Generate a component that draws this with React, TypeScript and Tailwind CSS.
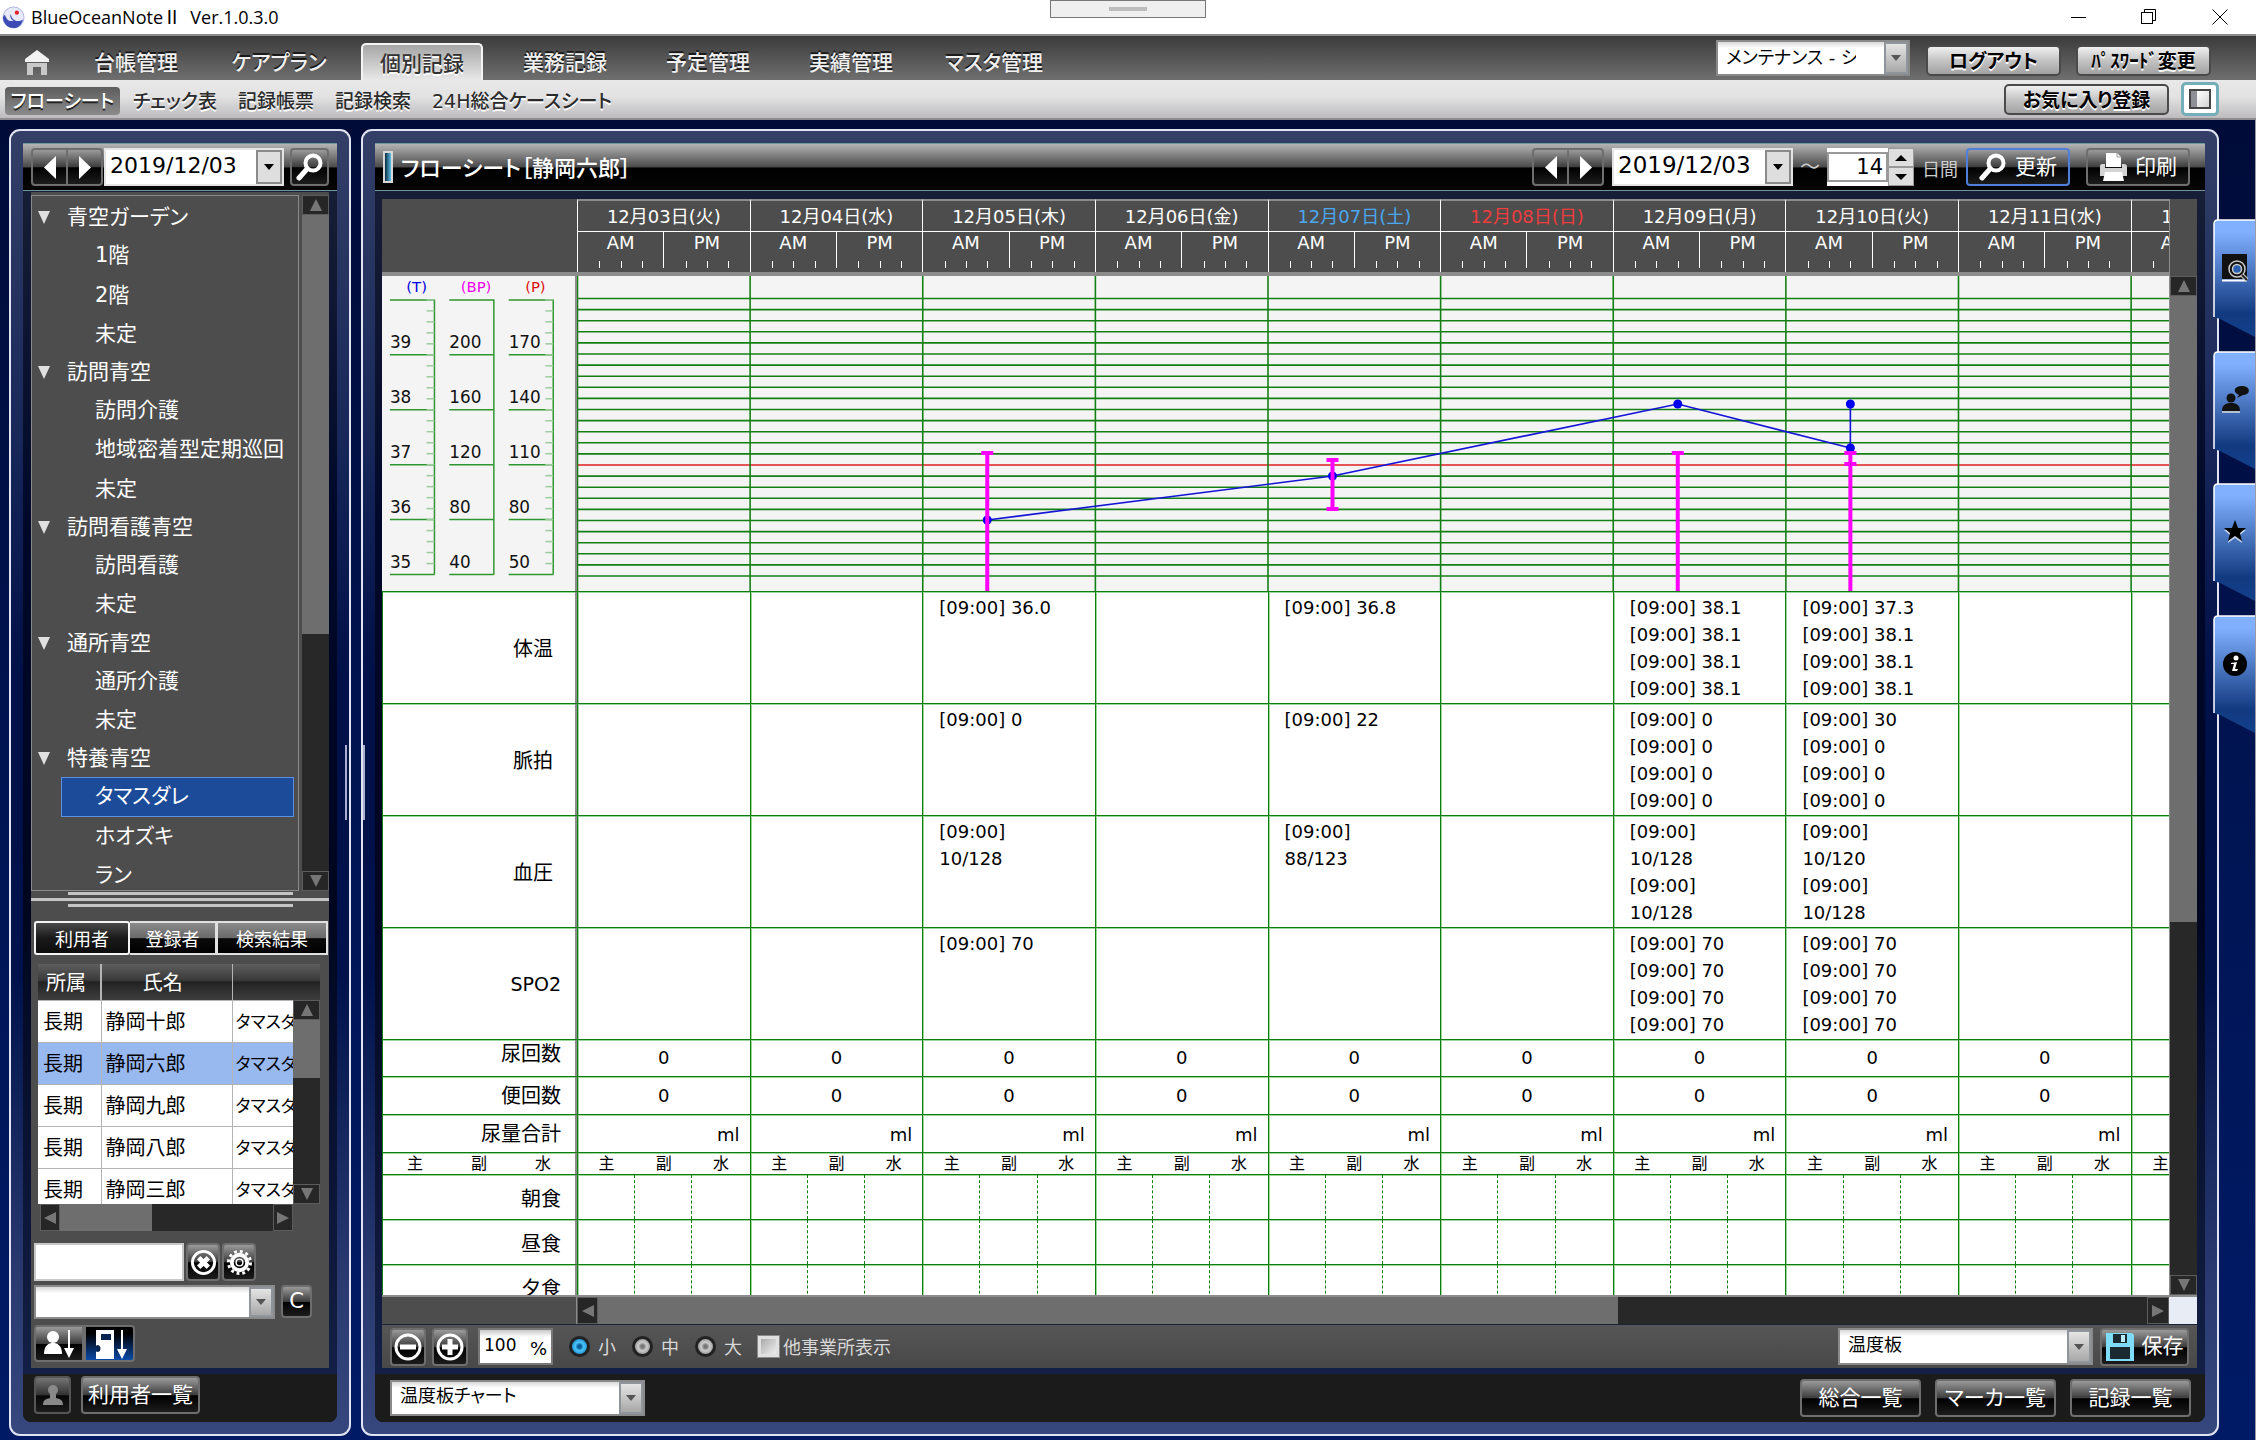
import type { ReactNode } from "react";
import clsx from "clsx";

const NAV = ["台帳管理", "ケアプラン", "個別記録", "業務記録", "予定管理", "実績管理", "マスタ管理"];
const SUBNAV = ["フローシート", "チェック表", "記録帳票", "記録検索", "24H総合ケースシート"];

const TREE = [
  { label: "青空ガーデン", children: ["1階", "2階", "未定"] },
  { label: "訪問青空", children: ["訪問介護", "地域密着型定期巡回", "未定"] },
  { label: "訪問看護青空", children: ["訪問看護", "未定"] },
  { label: "通所青空", children: ["通所介護", "未定"] },
  { label: "特養青空", children: ["タマスダレ", "ホオズキ", "ラン"] },
];

const USERS = ["静岡十郎", "静岡六郎", "静岡九郎", "静岡八郎", "静岡三郎"];

const DAYS = [
  { date: "12月03日(火)" },
  { date: "12月04日(水)" },
  { date: "12月05日(木)" },
  { date: "12月06日(金)" },
  { date: "12月07日(土)", color: "text-[#4aa8f0]" },
  { date: "12月08日(日)", color: "text-[#f03c3c]" },
  { date: "12月09日(月)" },
  { date: "12月10日(火)" },
  { date: "12月11日(水)" },
  { date: "12月12日(木)" },
];

const t = "[09:00]";
const VITALS: { label: string; pad: string; cells: Record<number, string[]> }[] = [
  {
    label: "体温",
    pad: "pr-[22px]",
    cells: {
      2: [`${t} 36.0`],
      4: [`${t} 36.8`],
      6: [`${t} 38.1`, `${t} 38.1`, `${t} 38.1`, `${t} 38.1`],
      7: [`${t} 37.3`, `${t} 38.1`, `${t} 38.1`, `${t} 38.1`],
    },
  },
  {
    label: "脈拍",
    pad: "pr-[22px]",
    cells: {
      2: [`${t} 0`],
      4: [`${t} 22`],
      6: [`${t} 0`, `${t} 0`, `${t} 0`, `${t} 0`],
      7: [`${t} 30`, `${t} 0`, `${t} 0`, `${t} 0`],
    },
  },
  {
    label: "血圧",
    pad: "pr-[22px]",
    cells: {
      2: [t, "10/128"],
      4: [t, "88/123"],
      6: [t, "10/128", t, "10/128"],
      7: [t, "10/120", t, "10/128"],
    },
  },
  {
    label: "SPO2",
    pad: "pr-[14px]",
    cells: {
      2: [`${t} 70`],
      6: [`${t} 70`, `${t} 70`, `${t} 70`, `${t} 70`],
      7: [`${t} 70`, `${t} 70`, `${t} 70`, `${t} 70`],
    },
  },
];

const SCALES = [
  { title: "(T)", color: "#0000e0", x: 8, values: [39, 38, 37, 36, 35], ticks: true },
  { title: "(BP)", color: "#f000f0", x: 68, values: [200, 160, 120, 80, 40], ticks: false },
  { title: "(P)", color: "#e01010", x: 128, values: [170, 140, 110, 80, 50], ticks: true },
];

const GRID = "grid grid-cols-[195px_repeat(9,minmax(0,9fr))_minmax(0,2fr)]";
const LINE_B = "border-b border-[#0f7d0f] shadow-[0_1px_0_0_#9bd69b]";
const LINE_L = "border-l border-l-[#0f7d0f] shadow-[inset_1px_0_0_0_#9bd69b]";
const GLOSS =
  "bg-[linear-gradient(#9a9a9a_0%,#3c3c3c_50%,#000_52%,#1c1c1c_100%)] border-2 border-[#6e6e6e] rounded-[4px] text-white";
const BAR = "bg-[linear-gradient(#b4b4b4_0%,#4a4a4a_50%,#000_52%,#060606_100%)] border-y border-[#6f969c]";
const CHROME =
  "rounded-[5px] border-2 border-[#4a4a4a] bg-[linear-gradient(#f0f0f0,#c4c4c4_50%,#a2a2a2)] pt-[2px] text-[19px] leading-none font-bold text-black [text-shadow:0_2px_0_#fff]";

function Search({ className }: { className?: string }) {
  return (
    <svg viewBox="0 0 28 28" className={className} fill="none" stroke="#fff">
      <circle cx="17" cy="10" r="7.5" strokeWidth="4" />
      <path d="M11 16 L3 25" strokeWidth="5" strokeLinecap="round" />
    </svg>
  );
}

function Tri({ dir, className }: { dir: "up" | "down" | "left" | "right"; className?: string }) {
  const d = {
    up: "M6 0 L12 12 L0 12 Z",
    down: "M0 0 L12 0 L6 12 Z",
    left: "M12 0 L12 12 L0 6 Z",
    right: "M0 0 L12 6 L0 12 Z",
  }[dir];
  return (
    <svg viewBox="0 0 12 12" preserveAspectRatio="none" className={className} fill="currentColor">
      <path d={d} />
    </svg>
  );
}

function ScrollButton({ dir, className }: { dir: "up" | "down" | "left" | "right"; className: string }) {
  return (
    <button
      aria-label={dir}
      className={clsx(
        "flex shrink-0 items-center justify-center border border-[#5c5c5c] bg-[#262626] text-[#767676]",
        className
      )}
    >
      <Tri dir={dir} className="size-3" />
    </button>
  );
}

function VScroll({ thumb, className }: { thumb: string; className?: string }) {
  return (
    <div className={clsx("flex flex-col bg-[#282828]", className)}>
      <ScrollButton dir="up" className="h-5" />
      <div className={clsx("bg-[#6e6e6e]", thumb)} />
      <div className="flex-1" />
      <ScrollButton dir="down" className="h-5" />
    </div>
  );
}

function Combo({ label, value, className, pad }: { label: string; value?: string; className: string; pad?: string }) {
  return (
    <div className={clsx("flex border-2 border-[#8a8a8a] bg-white", className)}>
      <select
        aria-label={label}
        className={clsx(
          "min-w-0 flex-1 appearance-none bg-white bg-[linear-gradient(#d8d8d8,#fff_6px)] pl-2 text-[18px] leading-none text-black",
          pad ?? "pb-1"
        )}
      >
        <option>{value ?? ""}</option>
      </select>
      <span className="pointer-events-none flex w-6 items-center justify-center border-2 border-[#8f959b] bg-[linear-gradient(#e4e4e4,#a8a8a8)] text-[#555]">
        <Tri dir="down" className="h-[6px] w-[10px]" />
      </span>
    </div>
  );
}

function DateBox({ label, className }: { label: string; className: string }) {
  return (
    <div className={clsx("flex h-[38px] border-2 border-[#e4e4e4] bg-white", className)}>
      <input
        aria-label={label}
        defaultValue="2019/12/03"
        className="min-w-0 flex-1 pb-1 pl-[4px] leading-none text-black"
      />
      <button aria-label="カレンダー" className="flex w-[26px] items-center justify-center border-2 border-[#8a8a8a] bg-[#dedede]">
        <Tri dir="down" className="h-[6px] w-[10px] text-black" />
      </button>
    </div>
  );
}

function NavArrows() {
  return (
    <div className="flex h-[38px] w-[72px]">
      <button aria-label="前へ" className={clsx(GLOSS, "flex flex-1 items-center justify-center rounded-r-none border-r")}>
        <Tri dir="left" className="h-[23px] w-3" />
      </button>
      <button aria-label="次へ" className={clsx(GLOSS, "flex flex-1 items-center justify-center rounded-l-none border-l")}>
        <Tri dir="right" className="h-[23px] w-3" />
      </button>
    </div>
  );
}

function Panel({ children, className }: { children: ReactNode; className: string }) {
  return (
    <section
      className={clsx(
        "flex flex-col rounded-[11px] border-2 border-[#dfe4f0] bg-[linear-gradient(#333f66_0%,#1d2b5c_20%,#001048_42%,#00124c_65%,#2a3a70_88%,#36477e_100%)] p-3",
        className
      )}
    >
      <div className="flex min-h-0 flex-1 flex-col rounded-b-lg bg-[linear-gradient(#1a2138_0%,#00082a_30%,#00061f_60%,#16224a_100%)]">
        {children}
      </div>
    </section>
  );
}

function TitleBar() {
  return (
    <header className="relative flex h-[34px] items-center bg-white pl-[2px] text-black">
      <svg viewBox="0 0 24 24" className="size-[23px]">
        <circle cx="12" cy="12" r="11" fill="#e8ebf7" stroke="#a9b2dc" />
        <path d="M3 9 C5 15 8 17 12 15 C9 14 8 11 9 8 C10 14 15 18 22 14 C20 21 16 23 12 23 C6 23 1 18 1 12 C1 11 2 10 3 9 Z" fill="#3c4cb4" />
        <circle cx="15.500" cy="7" r="2.200" fill="#e0202c" />
      </svg>
      <h1 className="pl-[6px] font-['Open_Sans','Noto_Sans_CJK_JP',sans-serif] text-[18px] leading-none">
        BlueOceanNoteⅡ&nbsp; Ver.1.0.3.0
      </h1>
      <div className="absolute top-0 left-1/2 flex h-[18px] w-[156px] -translate-x-1/2 items-center justify-center border border-[#777] bg-[#efefef]">
        <span className="h-1 w-[38px] bg-[#bdbdbd]" />
      </div>
      <div className="ml-auto flex items-center">
        <button aria-label="最小化" className="flex w-[70px] justify-center">
          <svg viewBox="0 0 16 16" className="size-4" stroke="#000">
            <path d="M0 8.500 H15" />
          </svg>
        </button>
        <button aria-label="元に戻す" className="flex w-[70px] justify-center">
          <svg viewBox="0 0 16 16" className="size-4" stroke="#000" fill="none">
            <rect x="0.500" y="3.500" width="11" height="11" />
            <path d="M3.500 3.500 V0.500 H14.500 V11.500 H11.500" />
          </svg>
        </button>
        <button aria-label="閉じる" className="flex w-[72px] justify-center">
          <svg viewBox="0 0 16 16" className="size-4" stroke="#000">
            <path d="M0.500 0.500 L15.500 15.500 M15.500 0.500 L0.500 15.500" />
          </svg>
        </button>
      </div>
    </header>
  );
}

function MainMenu() {
  return (
    <div className="flex h-[46px] items-end border-t-2 border-[#8c8c8c] bg-[linear-gradient(#3b3b3b,#6f6f6f)]">
      <button aria-label="ホーム" className="mb-1 ml-6 w-[51px]">
        <svg viewBox="0 0 26 26" className="size-[26px]">
          <path d="M13 0 L25 9 V12 H1 V9 Z" fill="#f2f2f2" />
          <path d="M3 13 H23 V25 H17 V17 H9 V25 H3 Z" fill="#c8c8c8" />
        </svg>
      </button>
      <nav className="flex gap-[21px]">
        {NAV.map((n) => (
          <a
            key={n}
            href="#"
            className={clsx(
              "flex h-[37px] w-[122px] items-center justify-center pt-1 text-[21px] leading-none font-medium",
              n === "個別記録"
                ? "rounded-t-[5px] border-x-2 border-t-2 border-[#f4f4f4] bg-[linear-gradient(#a6a6a6,#e8e8e8)] text-[#333] [text-shadow:0_2px_0_#fff]"
                : "text-[#f0f0f0] [text-shadow:0_-2px_0_#1a1a1a]"
            )}
          >
            {n}
          </a>
        ))}
      </nav>
      <div className="mb-1 ml-auto flex items-start pr-[45px]">
        <Combo label="利用者区分" value="メンテナンス - システム" className="h-[36px] w-[194px]" pad="pr-7" />
        <button className={clsx(CHROME, "mt-[5px] ml-4 h-[31px] w-[135px]")}>ログアウト</button>
        <button className={clsx(CHROME, "mt-[5px] ml-[15px] h-[31px] w-[135px]")}>ﾊﾟｽﾜｰﾄﾞ変更</button>
      </div>
    </div>
  );
}

function SubMenu() {
  return (
    <div className="flex h-10 items-center border-b-2 border-[#8d8b8e] bg-[linear-gradient(#e9e9e9_0%,#e2e2e2_45%,#bdbbbe_100%)] pl-[5px]">
      <nav className="flex items-center gap-[21px] pt-1">
        {SUBNAV.map((n, i) => (
          <a
            key={n}
            href="#"
            className={clsx(
              "text-[19px] leading-none font-medium",
              i === 0
                ? "-mr-2 flex h-7 w-[115px] items-center justify-center rounded-[4px] bg-[linear-gradient(#5d5d5d,#8b8b8b)] text-white [text-shadow:0_2px_0_#222]"
                : "text-[#2b2b2b] [text-shadow:0_2px_0_#fff]"
            )}
          >
            {n}
          </a>
        ))}
      </nav>
      <button className={clsx(CHROME, "ml-auto h-[31px] w-[165px]")}>お気に入り登録</button>
      <button
        aria-label="サイドバー"
        className="mr-[37px] ml-3 flex h-[34px] w-[38px] items-center justify-center rounded-[5px] border-[3px] border-[#74aeba] bg-white"
      >
        <span className="flex h-5 w-[22px] border-2 border-[#444]">
          <span className="w-[6px] bg-[#8f8f98]" />
          <span className="flex-1 bg-[linear-gradient(135deg,#fff,#d5d5d5)]" />
        </span>
      </button>
    </div>
  );
}

function Tree() {
  return (
    <div className="h-[696px] flex-1 overflow-hidden border border-[#8a8a8a]">
      <ul className="flex h-[699px] flex-col pt-[3px] text-[21px] leading-none text-white">
        {TREE.map((g) => [
          <li key={g.label} className="flex flex-1 items-center pl-[6px]">
            <Tri dir="down" className="h-[13px] w-3 text-[#e0e0e0]" />
            <span className="pl-[17px]">{g.label}</span>
          </li>,
          ...g.children.map((c, i) => (
            <li
              key={g.label + i}
              className={clsx(
                "mr-1 ml-[29px] flex flex-1 items-center border pl-[33px]",
                c === "タマスダレ" ? "border-[#5d8fe0] bg-[#1b4b99]" : "border-transparent"
              )}
            >
              {c}
            </li>
          )),
        ])}
      </ul>
    </div>
  );
}

function UserList() {
  return (
    <div className="mt-[9px] ml-[7px] w-[282px]">
      <div className="flex h-60">
        <div className="w-[255px] overflow-hidden">
          <table className="w-full table-fixed border-collapse text-[20px] leading-none text-black">
            <thead>
              <tr className="h-9 bg-[linear-gradient(#5e5e5e_0%,#3a3a3a_45%,#222_50%,#3e3e3e_100%)] text-white">
                <th className="w-[63px] border-r-2 border-[#b4b4b4] pt-[2px] pr-[6px] font-normal">所属</th>
                <th className="w-[131px] border-r border-[#b4b4b4] pt-[2px] pr-2 font-normal">氏名</th>
                <th />
              </tr>
            </thead>
            <tbody>
              {USERS.map((u, i) => (
                <tr key={u} className={clsx("h-[42px] border-y border-[#b4b4b4]", i === 1 ? "bg-[#98b9f0]" : "bg-white")}>
                  <td className="border-r border-[#b4b4b4] pt-[2px] pl-[5px]">長期</td>
                  <td className="border-r border-[#b4b4b4] pt-[2px] pl-1">{u}</td>
                  <td className="overflow-hidden pt-[2px] pl-[3px] text-[17px] whitespace-nowrap">タマスダレ</td>
                </tr>
              ))}
            </tbody>
          </table>
        </div>
        <div className="flex w-[27px] flex-col">
          <div className="h-9 bg-[linear-gradient(#5e5e5e_0%,#3a3a3a_45%,#222_50%,#3e3e3e_100%)]" />
          <VScroll thumb="h-[58px]" className="flex-1" />
        </div>
      </div>
      <div className="ml-[2px] flex h-[27px] w-[253px] bg-[#282828]">
        <ScrollButton dir="left" className="w-5" />
        <div className="w-[92px] bg-[#6e6e6e]" />
        <ScrollButton dir="right" className="ml-auto w-5" />
      </div>
    </div>
  );
}

function Sidebar() {
  return (
    <Panel className="w-[342px] shrink-0">
      <div className={clsx(BAR, "flex h-12 items-center px-2")}>
        <NavArrows />
        <DateBox label="基準日" className="ml-px w-[180px] text-[22px]" />
        <button aria-label="検索" className={clsx(GLOSS, "ml-auto flex h-[38px] w-[39px] items-center justify-center")}>
          <Search className="size-7" />
        </button>
      </div>
      <div className="mx-2 mt-px flex flex-1 flex-col bg-[#4d4d4d]">
        <div className="flex pt-[3px]">
          <Tree />
          <VScroll thumb="h-[419px]" className="ml-[3px] w-[27px]" />
        </div>
        <div className="flex flex-col items-center gap-[3px] pt-px">
          <span className="h-[3px] w-[225px] bg-[#c4c4c4]" />
          <span className="h-[3px] w-full bg-[#c4c4c4]" />
          <span className="h-[3px] w-[225px] bg-[#c4c4c4]" />
        </div>
        <div className="mt-[14px] flex h-[34px] pr-px pl-[3px] text-[18px] leading-none text-white">
          <button className="w-24 rounded-[3px] border-2 border-[#f4f4f4] bg-[linear-gradient(#4a4a4a,#1a1a1a_50%,#0c0c0c)] pt-1">
            利用者
          </button>
          <button className="w-[86px] border-y-2 border-r border-[#e0e0e0] bg-[linear-gradient(#8a8a8a,#6a6a6a_50%,#0a0a0a_52%,#000)] pt-1">
            登録者
          </button>
          <button className="flex-1 border-2 border-[#e0e0e0] bg-[linear-gradient(#8a8a8a,#6a6a6a_50%,#0a0a0a_52%,#000)] pt-1">
            検索結果
          </button>
        </div>
        <UserList />
        <div className="mt-3 flex gap-[2px] pl-[3px]">
          <input aria-label="検索文字" className="h-[38px] w-[150px] border-2 border-[#c8c8c8] bg-white px-2 text-black" />
          <button aria-label="クリア" className={clsx(GLOSS, "flex h-[38px] w-[34px] items-center justify-center")}>
            <svg viewBox="0 0 28 28" className="size-[27px] shrink-0" fill="none" stroke="#fff" strokeWidth="3">
              <circle cx="14" cy="14" r="11.500" />
              <path d="M9 9 L19 19 M19 9 L9 19" strokeWidth="5" />
            </svg>
          </button>
          <button aria-label="設定" className={clsx(GLOSS, "flex h-[38px] w-[34px] items-center justify-center")}>
            <svg viewBox="0 0 28 28" className="size-[27px] shrink-0" fill="none" stroke="#fff">
              <circle cx="14" cy="14" r="11.500" strokeWidth="3" strokeDasharray="3 3.020" />
              <circle cx="14" cy="14" r="8" strokeWidth="4" />
              <circle cx="14" cy="14" r="3.500" strokeWidth="1.500" />
            </svg>
          </button>
        </div>
        <div className="mt-1 flex gap-[6px] pl-[3px]">
          <Combo label="絞り込み" className="h-[34px] w-[241px]" />
          <button className={clsx(GLOSS, "h-[33px] w-[31px] text-[21px] leading-none")}>C</button>
        </div>
        <div className="mt-[6px] flex h-[37px] pl-[3px]">
          <button aria-label="氏名順" className={clsx(GLOSS, "flex w-[50px] items-center justify-center rounded-r-none")}>
            <svg viewBox="0 0 34 28" className="h-7 w-[34px]" fill="#fff">
              <circle cx="11" cy="7" r="6" />
              <path d="M2 24 C2 15 7 13 11 13 C15 13 20 15 20 24 Z" />
              <path d="M26 0 H28 V18 H32 L27 28 L22 18 H26 Z" />
            </svg>
          </button>
          <button
            aria-label="部屋順"
            className="flex w-[51px] items-center justify-center rounded-r-[4px] border-2 border-[#6e6e6e] bg-[linear-gradient(#000_20%,#0c4aa8)]"
          >
            <svg viewBox="0 0 34 30" className="h-[30px] w-[34px]">
              <path fill="#fff" d="M3 1 H21 V30 H3 V23 A4 4 0 0 0 3 16 Z" />
              <path fill="#0a2450" d="M8 5 H18 V11 H8 Z M4 16 A3.500 3.500 0 1 1 4 23 Z" />
              <path fill="#fff" d="M28 1 H30 V20 H34 L29 30 L24 20 H28 Z" />
            </svg>
          </button>
        </div>
      </div>
      <div className="mt-[6px] flex h-12 items-start gap-[10px] rounded-b-lg bg-[#1b1b1b] pt-[2px] pl-[11px]">
        <button aria-label="利用者" className={clsx(GLOSS, "flex h-[38px] w-[37px] items-center justify-center opacity-70")}>
          <svg viewBox="0 0 22 22" className="size-[22px]" fill="#b8b8b8">
            <circle cx="11" cy="6" r="5" />
            <path d="M8 9 H14 V14 C18 15 21 16 21 21 H1 C1 16 4 15 8 14 Z" />
          </svg>
        </button>
        <button className={clsx(GLOSS, "h-[38px] w-[119px] text-[21px] leading-none")}>利用者一覧</button>
      </div>
    </Panel>
  );
}

function ScaleColumn() {
  const row = 11.1;
  return (
    <svg viewBox="0 0 195 315" className="block h-[315px] w-full" fontFamily="DejaVu Sans">
      {SCALES.map((s) => (
        <g key={s.title}>
          <text x={s.x + 27} y="15" fontSize="15" fill={s.color} textAnchor="middle">
            {s.title}
          </text>
          <path d={`M${s.x + 45} 22 V300`} stroke="#2f962f" strokeWidth="1.500" />
          {[0, 5, 10, 15, 20, 25].map((i) => (
            <path key={i} d={`M${s.x} ${22.5 + i * row} h45`} stroke="#2f962f" strokeWidth="1.500" />
          ))}
          {s.ticks &&
            Array.from({ length: 25 }, (_, i) => (
              <path key={i} d={`M${s.x + 37} ${22.5 + i * row} h8`} stroke="#9ccc9c" strokeWidth="1.500" />
            ))}
          {s.values.map((v, i) => (
            <text key={v} x={s.x} y={71 + i * 5 * row} fontSize="17" fill="#111">
              {v}
            </text>
          ))}
        </g>
      ))}
    </svg>
  );
}

function VitalChart() {
  const row = 11.1;
  const day = (1592 * 9) / 83;
  const x = (d: number) => d * day + 65;
  return (
    <svg viewBox="0 0 1592 315" preserveAspectRatio="none" className="block h-[315px] w-full">
      {Array.from({ length: 26 }, (_, i) => (
        <path key={i} d={`M0 ${22.5 + i * row} H1592`} stroke={i === 15 ? "#e02020" : "#148014"} strokeWidth="1.600" />
      ))}
      {Array.from({ length: 10 }, (_, i) => (
        <path key={i} d={`M${i * day + 0.5} 0 V315`} stroke="#148014" strokeWidth="1.600" />
      ))}
      <path
        d={`M${x(2)} 244 L${x(4)} 200 L${x(6)} 128 L${x(7)} 172 V128`}
        fill="none"
        stroke="#1414d8"
        strokeWidth="1.600"
      />
      {[[2, 244], [4, 200], [6, 128], [7, 172], [7, 128]].map(([d, y]) => (
        <circle key={`${d}-${y}`} cx={x(d)} cy={y} r="4.500" fill="#0000f0" />
      ))}
      <g stroke="#ff00ff" strokeWidth="4">
        <path d={`M${x(2)} 177 V315 M${x(2) - 6} 177 h12`} />
        <path d={`M${x(4)} 184 V233 M${x(4) - 6} 184 h12 M${x(4) - 6} 233 h12`} />
        <path d={`M${x(6)} 177 V315 M${x(6) - 6} 177 h12`} />
        <path d={`M${x(7)} 177 V315 M${x(7) - 6} 177 h12 M${x(7) - 6} 188 h12`} />
      </g>
    </svg>
  );
}

// The last day runs off the right edge, so its content keeps a full day's width.
function dayWidth(i: number) {
  return i === DAYS.length - 1 ? "w-[173px]" : "w-full";
}

function FlowSheet() {
  return (
    <table className="block w-full bg-white text-black">
      <thead className="block">
        <tr className={clsx(GRID, "h-[77px] border-b-4 border-[#8c8c8c] bg-[#4d4d4d] text-[18px] leading-none text-white")}>
          <th />
          {DAYS.map((d, i) => (
            <th key={d.date} className="flex flex-col overflow-hidden border-t-2 border-l border-t-[#8c8c8c] border-l-white font-normal">
              <div className={clsx("flex h-[30px] shrink-0 items-center justify-center pt-[2px]", d.color, dayWidth(i))}>{d.date}</div>
              <div className={clsx("flex h-[37px] shrink-0 border-t border-white", dayWidth(i))}>
                {["AM", "PM"].map((h) => (
                  <div key={h} className={clsx("flex flex-1 flex-col justify-between pt-[2px]", h === "PM" && "border-l border-white")}>
                    <span>{h}</span>
                    <span className="grid h-[7px] grid-cols-4">
                      <i />
                      <i className="border-l border-white" />
                      <i className="border-l border-white" />
                      <i className="border-l border-white" />
                    </span>
                  </div>
                ))}
              </div>
            </th>
          ))}
        </tr>
      </thead>
      <tbody className="block">
        <tr className={clsx(GRID, LINE_B, "bg-[#f4f4f4]")}>
          <th className="border-r-2 border-[#8c8c8c] font-normal">
            <ScaleColumn />
          </th>
          <td className="col-span-10">
            <VitalChart />
          </td>
        </tr>
        {VITALS.map((v) => (
          <tr key={v.label} className={clsx(GRID, LINE_B, "h-28")}>
            <th
              className={clsx(
                "flex items-center justify-end border-r-2 border-l border-r-[#8c8c8c] border-l-[#0f7d0f] pt-[2px] leading-none font-normal",
                v.label === "SPO2" ? "text-[19px]" : "text-[20px]",
                v.pad
              )}
            >
              {v.label}
            </th>
            {DAYS.map((d, i) => (
              <td key={d.date} className={clsx(LINE_L, "pt-[2px] pl-4 text-[18px] leading-[27px]")}>
                {v.cells[i]?.map((line, n) => (
                  <div key={n}>{line}</div>
                ))}
              </td>
            ))}
          </tr>
        ))}
        {["尿回数", "便回数", "尿量合計"].map((label) => (
          <tr key={label} className={clsx(GRID, LINE_B, label === "尿回数" ? "h-[37px]" : "h-[38px]")}>
            <th
              className={clsx(
                "flex justify-end border-r-2 border-l border-r-[#8c8c8c] border-l-[#0f7d0f] pr-[14px] text-[20px] leading-none font-normal",
                label === "尿回数" ? "items-start pt-1" : "items-center"
              )}
            >
              {label}
            </th>
            {DAYS.map((d, i) => (
              <td key={d.date} className={clsx(LINE_L, "flex items-center overflow-hidden text-[18px] leading-none")}>
                {i === 9 ? null : label === "尿量合計" ? (
                  <span className="w-full pt-[2px] pr-[10px] text-right">ml</span>
                ) : (
                  <span className="w-full text-center">0</span>
                )}
              </td>
            ))}
          </tr>
        ))}
        <tr className={clsx(GRID, LINE_B, "h-[22px] text-[16px] leading-none")}>
          <th className="grid grid-cols-3 items-center border-r-2 border-l border-r-[#8c8c8c] border-l-[#0f7d0f] text-center font-normal">
            <span>主</span>
            <span>副</span>
            <span>水</span>
          </th>
          {DAYS.map((d, i) => (
            <td key={d.date} className={clsx(LINE_L, "overflow-hidden text-center")}>
              <div className={clsx("grid h-full grid-cols-3 items-center", dayWidth(i))}>
                <span>主</span>
                <span>副</span>
                <span>水</span>
              </div>
            </td>
          ))}
        </tr>
        {["朝食", "昼食", "夕食"].map((label) => (
          <tr key={label} className={clsx(GRID, LINE_B, "h-[45px]")}>
            <th className="flex items-center justify-end border-r-2 border-l border-r-[#8c8c8c] border-l-[#0f7d0f] pt-1 pr-[14px] text-[20px] leading-none font-normal">
              {label}
            </th>
            {DAYS.map((d, i) => (
              <td key={d.date} className={clsx(LINE_L, "overflow-hidden")}>
                <div className={clsx("grid h-full grid-cols-3", dayWidth(i))}>
                  <span className="border-r border-dashed border-[#0f7d0f]" />
                  <span className="border-r border-dashed border-[#0f7d0f]" />
                  <span />
                </div>
              </td>
            ))}
          </tr>
        ))}
      </tbody>
    </table>
  );
}

function SizeRadio({ label, checked }: { label: string; checked?: boolean }) {
  return (
    <label className="flex w-[63px] items-center gap-2">
      <input
        type="radio"
        name="size"
        defaultChecked={checked}
        className="size-[21px] appearance-none rounded-full border-[3px] border-[#222] bg-[radial-gradient(circle,#777_15%,#ccc_40%,#999_75%)] checked:bg-[radial-gradient(circle,#0a5a9a_15%,#4ac4f8_40%,#1a8ad0_80%)]"
      />
      <span className="pt-[2px]">{label}</span>
    </label>
  );
}

function ChartToolbar() {
  return (
    <div className="flex h-11 items-center border-t border-[#1c2338] bg-[linear-gradient(#565656,#484848)] px-2 text-[18px] leading-none text-[#d8d8d8]">
      <button aria-label="縮小" className={clsx(GLOSS, "flex h-[38px] w-9 items-center justify-center")}>
        <svg viewBox="0 0 28 28" className="size-7" fill="none" stroke="#fff">
          <circle cx="14" cy="14" r="12" strokeWidth="3" />
          <path d="M6 14 H22" strokeWidth="5" />
        </svg>
      </button>
      <button aria-label="拡大" className={clsx(GLOSS, "ml-[6px] flex h-[38px] w-9 items-center justify-center")}>
        <svg viewBox="0 0 28 28" className="size-7" fill="none" stroke="#fff">
          <circle cx="14" cy="14" r="12" strokeWidth="3" />
          <path d="M6 14 H22 M14 6 V22" strokeWidth="5" />
        </svg>
      </button>
      <div className="ml-[10px] flex h-[37px] w-[75px] items-center border-2 border-[#777] bg-white bg-[linear-gradient(#c8c8c8,#fff_7px)] pr-1 pl-1 text-black">
        <input aria-label="倍率" defaultValue="100" className="w-0 min-w-0 flex-1 bg-transparent pb-1 text-[17px]" />
        <span className="pt-1">%</span>
      </div>
      <div className="ml-4 flex">
        <SizeRadio label="小" checked />
        <SizeRadio label="中" />
        <SizeRadio label="大" />
      </div>
      <label className="flex items-center gap-1">
        <input
          type="checkbox"
          className="size-[21px] appearance-none border-[3px] border-[#e0e0e0] bg-[linear-gradient(135deg,#aaa,#eee)] outline outline-[#8a8a8a]"
        />
        <span className="pt-[2px]">他事業所表示</span>
      </label>
      <Combo label="様式" value="温度板" className="ml-auto h-[37px] w-[255px]" />
      <button className={clsx(GLOSS, "ml-[7px] flex h-[38px] w-[89px] items-center justify-center gap-2 text-[21px]")}>
        <svg viewBox="0 0 28 28" className="size-7">
          <path fill="#7fdcf6" d="M0 0 H26 L28 2 V28 H0 Z" />
          <path fill="#1b2a30" d="M7 1 H21 V10 H7 Z M4 14 H24 V26 H4 Z" />
          <path fill="#b8ecfa" d="M15 2 H19 V9 H15 Z" />
        </svg>
        保存
      </button>
    </div>
  );
}

function MainPanel() {
  return (
    <Panel className="min-w-0 flex-1">
      <div className={clsx(BAR, "flex h-12 items-center pr-[15px] pl-2 text-white")}>
        <span className="h-8 w-[10px] border-2 border-[#d8d8d8] bg-[linear-gradient(90deg,#0a2a40,#5cc0e8)]" />
        <h2 className="pt-1 pl-2 text-[22px] leading-none font-medium">フローシート［静岡六郎］</h2>
        <div className="ml-auto flex items-center">
          <NavArrows />
          <DateBox label="開始日" className="ml-2 w-[181px] text-[23px]" />
          <span className="w-[34px] text-center text-[20px] text-[#ccc]">～</span>
          <div className="flex h-[38px] w-[87px] bg-white">
            <input
              aria-label="日数"
              defaultValue="14"
              className="my-1 min-w-0 flex-1 border-2 border-[#999] pr-[3px] text-right text-[21px] leading-none text-black"
            />
            <span className="flex w-[26px] flex-col text-black">
              <button aria-label="増やす" className="flex flex-1 items-center justify-center border border-[#999] bg-[#dedede]">
                <Tri dir="up" className="h-[6px] w-3" />
              </button>
              <button aria-label="減らす" className="flex flex-1 items-center justify-center border border-[#999] bg-[#dedede]">
                <Tri dir="down" className="h-[6px] w-3" />
              </button>
            </span>
          </div>
          <span className="px-2 pt-1 text-[18px] text-[#ccc]">日間</span>
          <button
            className={clsx(
              GLOSS,
              "flex h-[38px] w-[104px] items-center justify-center gap-2 border-[#4f7fd8]! text-[21px] leading-none"
            )}
          >
            <Search className="size-7" />
            更新
          </button>
          <button className={clsx(GLOSS, "ml-4 flex h-[38px] w-[104px] items-center justify-center gap-2 text-[21px] leading-none")}>
            <svg viewBox="0 0 28 28" className="size-7">
              <path fill="#fff" d="M7 0 H18 L22 4 V14 H7 Z" />
              <path fill="#d4d4d4" d="M1 13 Q1 11 3 11 H6 V15 H23 V11 H25 Q28 11 28 14 V23 H1 Z" />
              <path fill="#fff" d="M6 19 H23 L25 28 H4 Z" />
              <path fill="none" stroke="#999" d="M18 0 V4 H22" />
            </svg>
            印刷
          </button>
        </div>
      </div>
      <div className="mr-2 ml-[7px] mt-2 flex min-h-0 flex-1 flex-col">
        <div className="flex min-h-0 flex-1">
          <div className="h-full min-w-0 flex-1 overflow-hidden">
            <FlowSheet />
          </div>
          <div className="flex w-7 flex-col border-l border-[#8c8c8c]">
            <div className="h-[77px] bg-[#4d4d4d]" />
            <VScroll thumb="h-[626px]" className="flex-1" />
          </div>
        </div>
        <div className="flex h-[29px] border-t-2 border-[#8c8c8c] bg-[#282828]">
          <div className="w-[195px] border-r border-[#8c8c8c] bg-[#4d4d4d]" />
          <ScrollButton dir="left" className="w-[21px]" />
          <div className="w-[1020px] bg-[#6e6e6e]" />
          <ScrollButton dir="right" className="ml-auto w-[22px]" />
          <div className="w-7 bg-[#e8ecf4]" />
        </div>
        <ChartToolbar />
      </div>
      <div className="mt-[6px] flex h-12 items-center rounded-b-lg bg-[#1b1b1b] pr-[14px] pl-[15px]">
        <Combo label="チャート" value="温度板チャート" className="h-9 w-[255px]" />
        <div className="ml-auto flex gap-[14px]">
          {["総合一覧", "マーカ一覧", "記録一覧"].map((b) => (
            <button key={b} className={clsx(GLOSS, "h-[38px] w-[121px] text-[21px] leading-none")}>
              {b}
            </button>
          ))}
        </div>
      </div>
    </Panel>
  );
}

function SideTab({ label, children }: { label: string; children: ReactNode }) {
  return (
    <button aria-label={label} className="relative h-[119px] w-[42px]">
      <svg viewBox="0 0 42 119" className="block size-full">
        <defs>
          <linearGradient id="tab" x1="0" y1="0" x2="0" y2="1">
            <stop offset="0.100" stopColor="#80b0ff" />
            <stop offset="0.800" stopColor="#123a80" />
            <stop offset="1" stopColor="#12408c" />
          </linearGradient>
        </defs>
        <path d="M1 98 V5 Q1 1 5 1 H42 V118 L7 100 Z" fill="url(#tab)" />
        <path d="M1 98 V5 Q1 1 5 1 H42" fill="none" stroke="#fff" strokeWidth="1.500" />
        <g transform="translate(9 35)">{children}</g>
      </svg>
    </button>
  );
}

function SideTabs() {
  return (
    <div className="absolute top-[99px] right-0 flex flex-col gap-[13px]">
      <SideTab label="検索">
        <rect width="25" height="25" fill="#111" />
        <path d="M0 26.500 H25" stroke="#fff" strokeWidth="2" />
        <circle cx="15" cy="15" r="8" fill="#111" stroke="#ccc" strokeWidth="1.500" />
        <circle cx="15" cy="15" r="4.500" fill="#2a5fae" stroke="#ccc" strokeWidth="1.500" />
        <path d="M20 21 L25 26" stroke="#ccc" strokeWidth="4" />
        <path d="M20 21 L25 26" stroke="#222" strokeWidth="2" />
      </SideTab>
      <SideTab label="相談">
        <circle cx="9" cy="12" r="4.500" fill="#111" />
        <path d="M0 25 C0 18 5 17 9 17 C13 17 18 18 18 25 Z" fill="#111" />
        <path d="M0 26 H18" stroke="#ddd" strokeWidth="1.500" />
        <path d="M15 12 L17 9 C10 6 12 0 20 0 C29 0 29 9 21 9 Z" fill="#111" />
      </SideTab>
      <SideTab label="お気に入り">
        <path d="M13 5 L16 12 L24 12 L18 17 L20 25 L13 20 L6 25 L8 17 L2 12 L10 12 Z" fill="#fff" opacity="0.700" />
        <path d="M13 2 L16 10 L24 10 L18 15 L20 23 L13 18 L6 23 L8 15 L2 10 L10 10 Z" fill="#000" />
      </SideTab>
      <SideTab label="情報">
        <circle cx="13" cy="14" r="12" fill="#000" />
        <circle cx="14" cy="8" r="2.500" fill="#fff" />
        <path d="M9 13 L15 12 L13 19 L16 19 L15 21 L10 21 L12 14 L9 14 Z" fill="#fff" />
      </SideTab>
    </div>
  );
}

export default function App() {
  return (
    <div className="flex h-screen flex-col overflow-hidden bg-[#000f3c] font-['DejaVu_Sans','Noto_Sans_CJK_JP',sans-serif] [font-feature-settings:'palt']">
      <TitleBar />
      <MainMenu />
      <SubMenu />
      <main className="relative flex min-h-0 flex-1 gap-[10px] border-r border-[#9a9aa4] bg-[linear-gradient(#000b38,#001452_50%,#001a66)] pt-[9px] pr-9 pb-1 pl-[9px]">
        <Sidebar />
        <MainPanel />
        <span className="absolute top-[625px] left-[345px] h-[75px] w-5 border-x-2 border-[#aab0cc]" />
        <SideTabs />
      </main>
    </div>
  );
}
